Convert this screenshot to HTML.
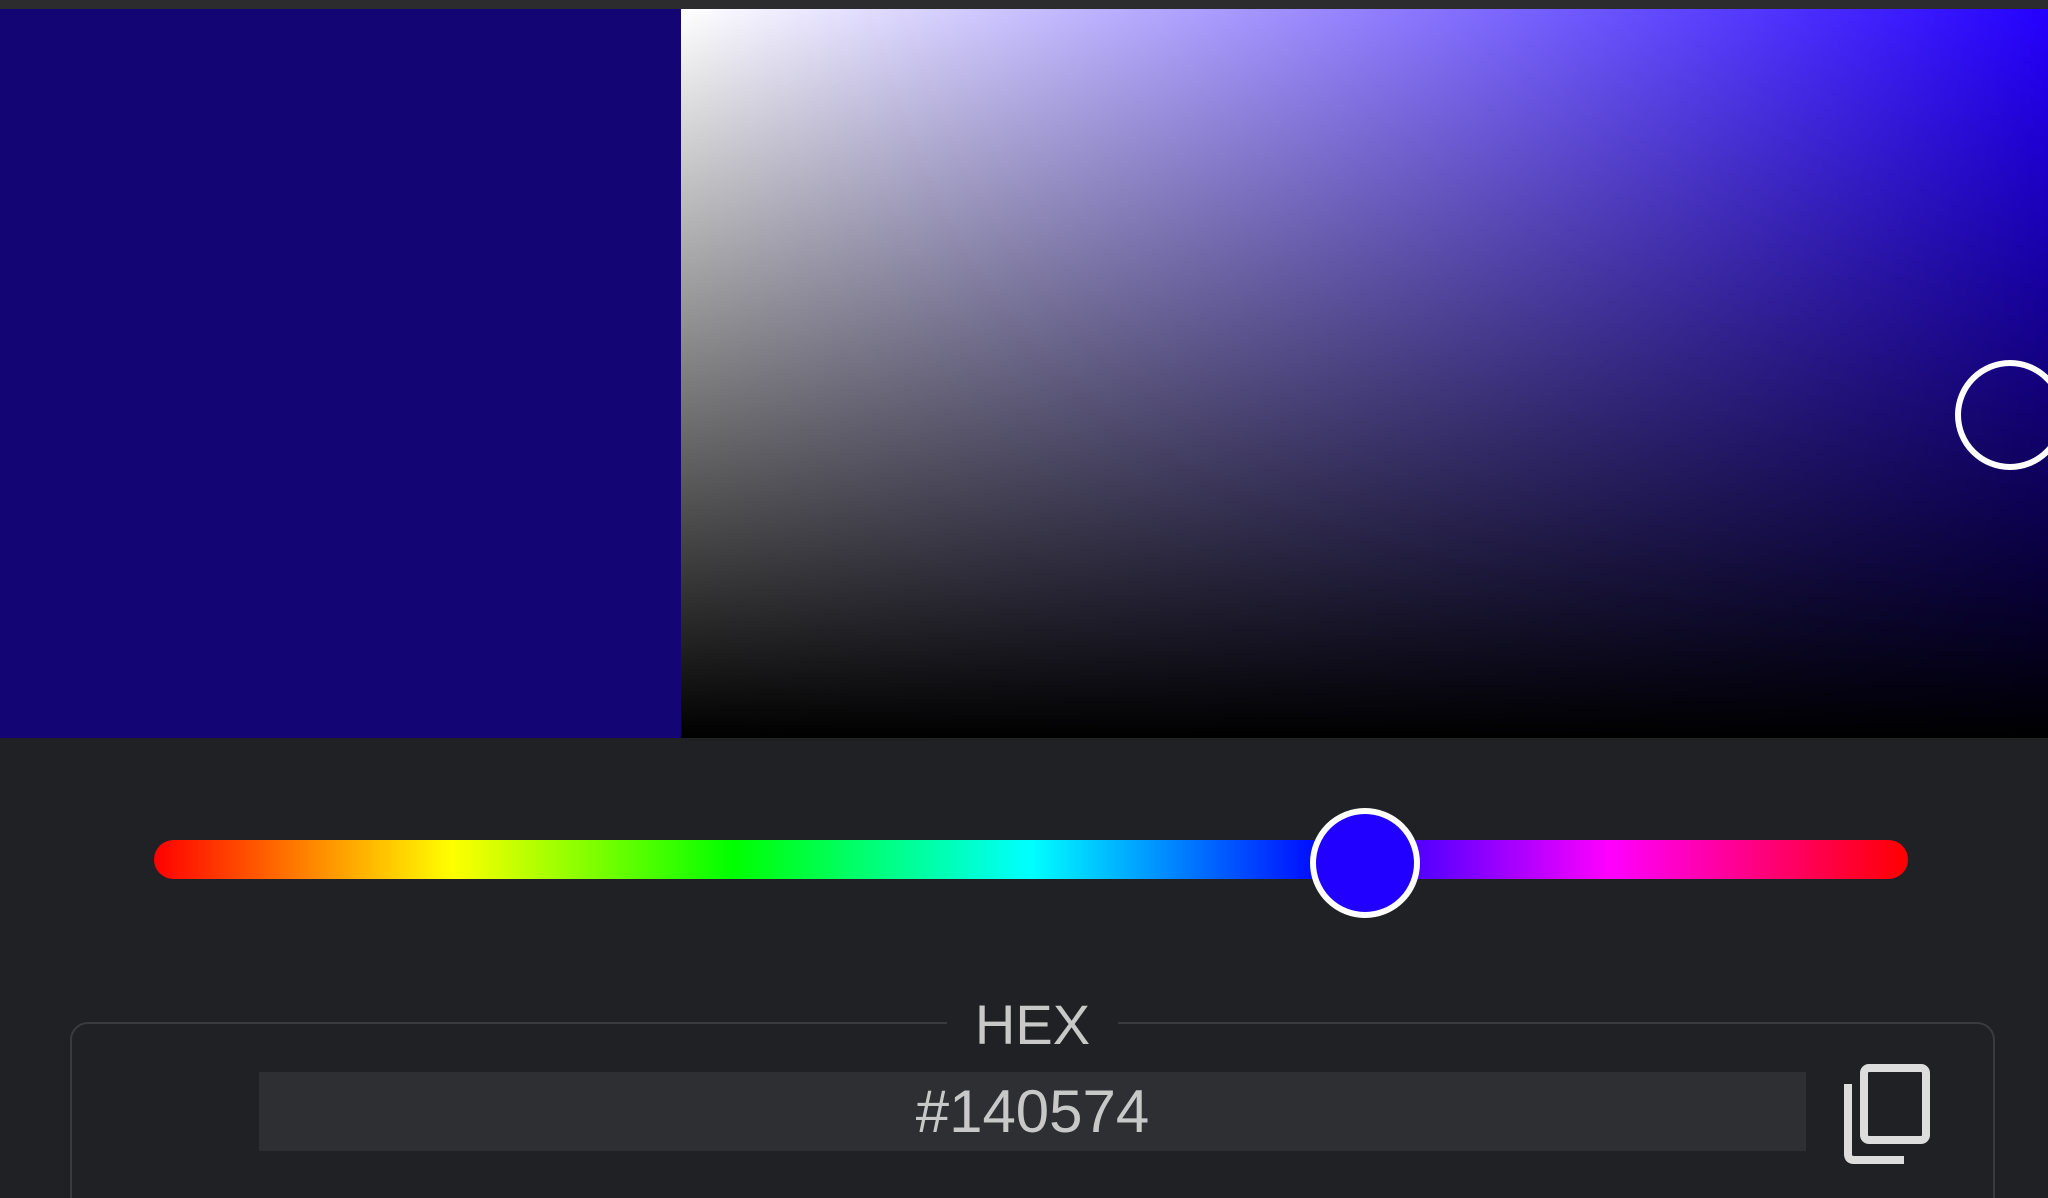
<!DOCTYPE html>
<html><head><style>
html,body{margin:0;padding:0;width:2048px;height:1198px;background:#202124;overflow:hidden;font-family:"Liberation Sans",sans-serif;}
#w{position:relative;width:2048px;height:1198px;overflow:hidden;}
.top{position:absolute;left:0;top:0;width:2048px;height:9px;background:#2c2c2f;}
.sw{position:absolute;left:0;top:9px;width:681px;height:729px;background:#140574;}
.sv{position:absolute;left:681px;top:9px;width:1367px;height:729px;background:linear-gradient(to top,#000,rgba(0,0,0,0)),linear-gradient(to right,#fff,#2400ff);}
.c{position:absolute;left:1955px;top:360px;width:98px;height:98px;border:6px solid #fff;border-radius:50%;box-sizing:content-box;}
.track{position:absolute;left:154px;top:840px;width:1754px;height:39px;border-radius:20px;background:linear-gradient(to right,#f00 0%,#ff0 17%,#0f0 33%,#0ff 50%,#00f 67%,#f0f 83%,#f00 100%);}
.th{position:absolute;left:1310px;top:808px;width:98px;height:98px;border:6px solid #fff;border-radius:50%;background:#2200ff;}
.fs{position:absolute;left:70px;top:1022px;width:1921px;height:220px;border:2px solid #3a3b3e;border-radius:18px;}
.lg{position:absolute;left:947px;top:990px;width:171px;text-align:center;background:#202124;color:#c8c8c8;font-size:56px;line-height:70px;}
.in{position:absolute;left:259px;top:1072px;width:1547px;height:79px;background:#2e2f33;color:#c8c8c8;font-size:60px;line-height:79px;text-align:center;}
</style></head><body><div id="w">
<div class="top"></div>
<div class="sw"></div>
<div class="sv"></div>
<div class="c"></div>
<div class="track"></div>
<div class="th"></div>
<div class="fs"></div>
<div class="lg">HEX</div>
<div class="in">#140574</div>
<svg style="position:absolute;left:1842px;top:1062px" width="92" height="102" viewBox="0 0 92 102">
<path d="M6 22 V92 Q6 98 12 98 H62" fill="none" stroke="#ddd" stroke-width="8"/>
<rect x="22" y="6" width="62" height="72" rx="5" fill="none" stroke="#ddd" stroke-width="8"/>
</svg>
</div></body></html>
